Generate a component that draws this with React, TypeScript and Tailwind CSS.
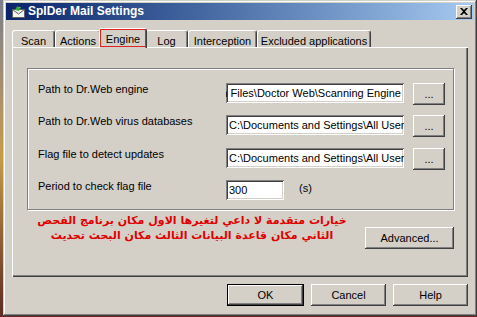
import React from "react";

const raised =
  "shadow-[inset_-1px_-1px_#404040,inset_1px_1px_#ffffff,inset_-2px_-2px_#808080,inset_2px_2px_#d4d0c8]";
const sunken =
  "shadow-[inset_1px_1px_#808080,inset_-1px_-1px_#ffffff,inset_2px_2px_#404040,inset_-2px_-2px_#d4d0c8]";

const tabs = [
  { label: "Scan", w: "w-[43px]" },
  { label: "Actions", w: "w-[46px]" },
  { label: "Engine", w: "w-[48px]", active: true },
  { label: "Log", w: "w-[43px]" },
  { label: "Interception", w: "w-[69px]" },
  { label: "Excluded applications", w: "w-[114px]" },
];

function MailIcon() {
  return (
    <svg width="13" height="12" viewBox="0 0 13 12">
      <rect x="0.5" y="3.5" width="12" height="8" fill="#f4f4f4" stroke="#606060" />
      <path d="M0.5 3.5 L6.5 8 L12.5 3.5" fill="none" stroke="#606060" />
      <path d="M3 4 L5 0.5 L8 2.5 L7 5 Z" fill="#2fa82f" />
      <path d="M5 0.5 L9 1.5 L8 2.5 Z" fill="#7fdc5a" />
    </svg>
  );
}

function Field({ text, w, end }: { text: string; w: string; end?: boolean }) {
  return (
    <div
      className={`${w} h-[20px] bg-white ${sunken} overflow-hidden flex ${end ? "justify-end pr-[3px]" : "pl-[3px]"} pt-[4px]`}
    >
      <span className="whitespace-nowrap leading-[13px] text-black">{text}</span>
    </div>
  );
}

function Browse() {
  return (
    <div className={`w-[32px] h-[22px] ml-[9px] bg-[#d4d0c8] ${raised} flex items-center justify-center`}>
      <span className="leading-[13px]">...</span>
    </div>
  );
}

function Row({ label, text, end, mt }: { label: string; text: string; end?: boolean; mt: string }) {
  return (
    <div className={`flex items-start h-[22px] ${mt}`}>
      <div className="w-[188px] leading-[13px]">{label}</div>
      <Field text={text} w="w-[178px]" end={end} />
      <Browse />
    </div>
  );
}

export default function App() {
  return (
    <div className="w-[477px] h-[317px] flex flex-col bg-[#6b2a22] overflow-hidden font-['Liberation_Sans',Arial,sans-serif] text-[11px] text-black">
      <div className="flex h-[316px]">
        <div className="w-[3px] h-full bg-linear-to-b from-[#7c7f8a] via-[#c99a48] to-[#5e2c22]" />
        <div className="w-[474px] h-full bg-[#d4d0c8] p-[3px] flex flex-col shadow-[inset_-1px_-1px_#404040,inset_1px_1px_#d4d0c8,inset_-2px_-2px_#808080,inset_2px_2px_#ffffff]">
          {/* title bar */}
          <div className="h-[17px] flex items-center bg-linear-to-r from-[#0a246a] to-[#a6caf0] pl-[6px] pr-[2px]">
            <MailIcon />
            <span className="ml-[3px] text-white font-bold text-[12px] leading-[15px]">SpIDer Mail Settings</span>
            <div className={`ml-auto w-[16px] h-[14px] bg-[#d4d0c8] ${raised} flex items-center justify-center`}>
              <svg width="8" height="7" viewBox="0 0 8 7">
                <path d="M0 0h2l2 2 2-2h2L5 3.5 8 7H6L4 5 2 7H0l3-3.5z" fill="#000" />
              </svg>
            </div>
          </div>

          <div className="ml-[6px] mt-[8px] w-[456px]">
            {/* tabs */}
            <div className="flex items-end h-[19px] relative z-10">
              {tabs.map((t) =>
                t.active ? (
                  <div
                    key={t.label}
                    className={`${t.w} h-[20px] -mx-[2px] -mb-[1px] relative bg-[#d4d0c8] border-t border-l border-white border-r border-r-[#404040] shadow-[inset_-1px_0_#808080] rounded-t-[3px] text-center pt-[2px]`}
                  >
                    <span className="leading-[13px]">{t.label}</span>
                    <div className="absolute left-[0px] right-[0px] top-[0px] h-[18px] border border-[#e02424]" />
                  </div>
                ) : (
                  <div
                    key={t.label}
                    className={`${t.w} h-[17px] bg-[#d4d0c8] border-t border-l border-white border-r border-r-[#404040] shadow-[inset_-1px_0_#808080] rounded-t-[3px] text-center pt-[2px]`}
                  >
                    <span className="leading-[13px]">{t.label}</span>
                  </div>
                )
              )}
            </div>

            {/* panel */}
            <div className="h-[230px] border-t border-l border-white shadow-[inset_-1px_-1px_#404040,inset_-2px_-2px_#808080] pl-[14px] pt-[20px]">
              <div className="w-[427px] h-[142px] border border-[#808080] shadow-[1px_1px_0_#ffffff,inset_1px_1px_0_#ffffff] pl-[10px] pt-[14px]">
                <Row label="Path to Dr.Web engine" text="C:\Program Files\Doctor Web\Scanning Engine" end mt="mt-0" />
                <Row
                  label="Path to Dr.Web virus databases"
                  text="C:\Documents and Settings\All Users\Application Data"
                  mt="mt-[10px]"
                />
                <Row
                  label="Flag file to detect updates"
                  text="C:\Documents and Settings\All Users\Application Data"
                  mt="mt-[11px]"
                />
                <div className="flex items-start h-[22px] mt-[10px]">
                  <div className="w-[188px] leading-[13px]">Period to check flag file</div>
                  <Field text="300" w="w-[58px]" />
                  <span className="ml-[15px] pt-[2px] leading-[13px]">(s)</span>
                </div>
              </div>

              <div className="flex items-start mt-[3px] w-[427px]">
                <div
                  dir="rtl"
                  className="w-[330px] text-center whitespace-nowrap font-['DejaVu_Sans',sans-serif] font-bold text-[11px] leading-[15px] text-[#e00000]"
                >
                  <div>خيارات متقدمة لا داعي لتغيرها الاول مكان برنامج الفحص</div>
                  <div>الثاني مكان قاعدة البيانات الثالث مكان البحث تحديث</div>
                </div>
                <div className={`ml-auto mt-[14px] w-[89px] h-[22px] bg-[#d4d0c8] ${raised} flex items-center justify-center`}>
                  <span className="leading-[13px]">Advanced...</span>
                </div>
              </div>
            </div>

            {/* dialog buttons */}
            <div className="flex justify-end gap-[7px] mt-[7px]">
              <div className="w-[77px] h-[22px] border border-black bg-[#d4d0c8] shadow-[inset_-1px_-1px_#404040,inset_1px_1px_#ffffff,inset_-2px_-2px_#808080] flex items-center justify-center">
                <span className="leading-[13px]">OK</span>
              </div>
              <div className={`w-[75px] h-[22px] bg-[#d4d0c8] ${raised} flex items-center justify-center`}>
                <span className="leading-[13px]">Cancel</span>
              </div>
              <div className={`w-[75px] h-[22px] bg-[#d4d0c8] ${raised} flex items-center justify-center`}>
                <span className="leading-[13px]">Help</span>
              </div>
            </div>
          </div>
        </div>
      </div>
    </div>
  );
}
